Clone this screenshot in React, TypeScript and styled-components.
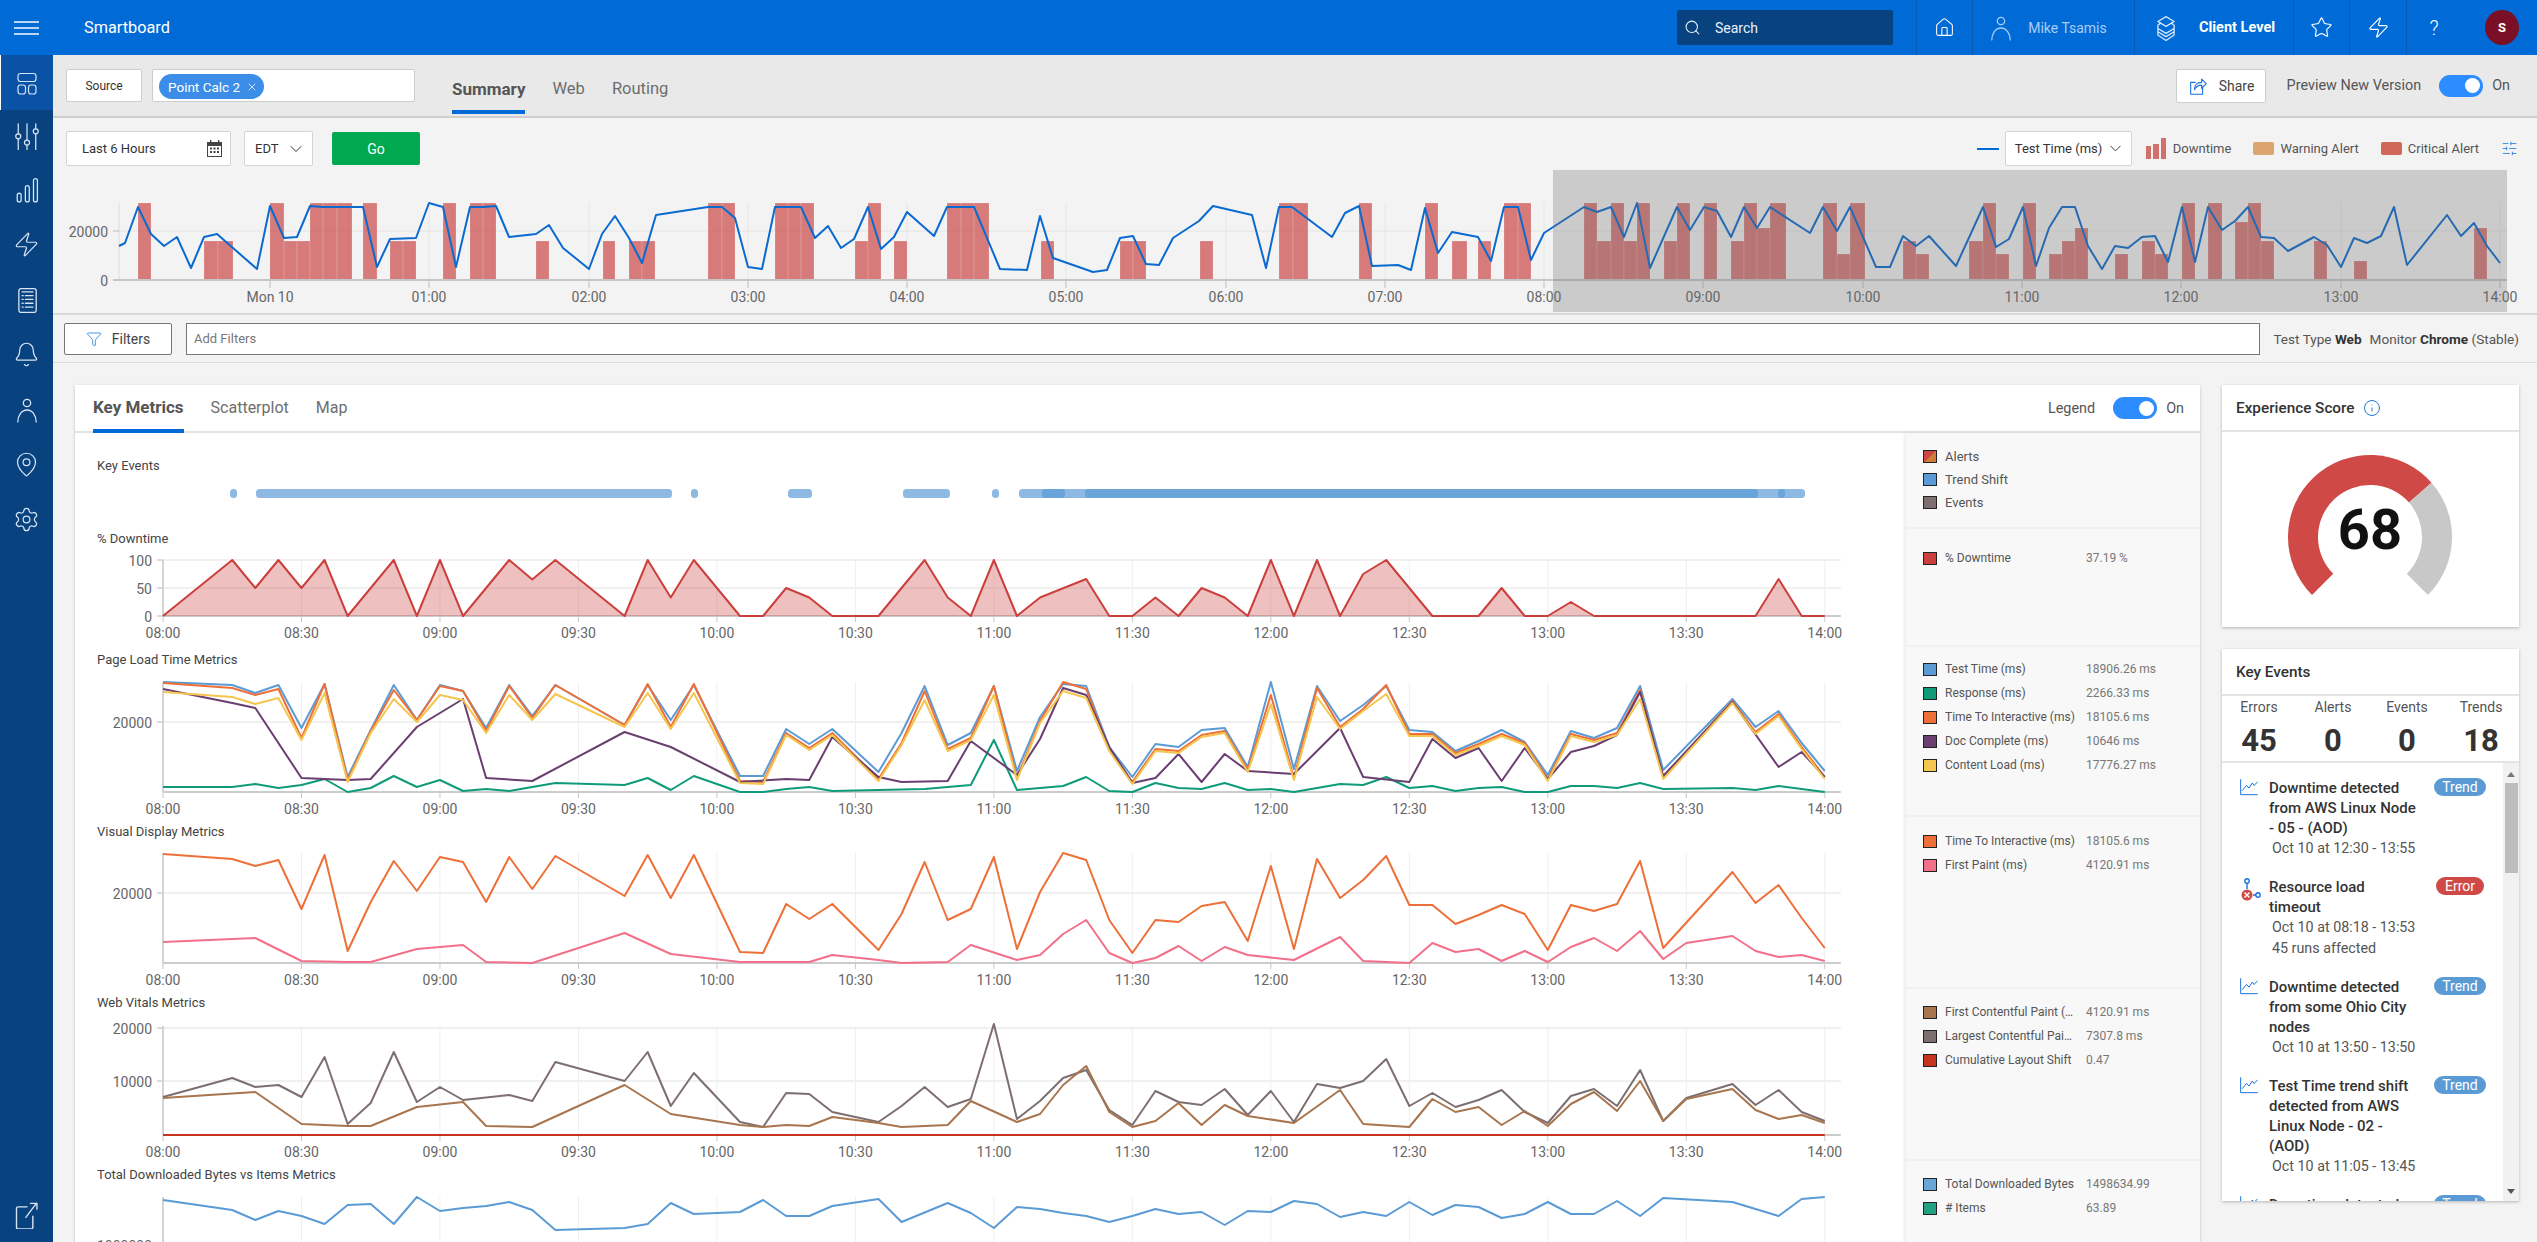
import React from "react";
import styled, { createGlobalStyle } from "styled-components";
import { Search, House, Star, Zap, ChevronDown, X, Funnel, SlidersHorizontal, Bell, MapPin, Settings, Info } from "lucide-react";

type Pt = [number, number];

const GlobalStyle = createGlobalStyle`
  html, body { margin: 0; padding: 0; height: 100%; overflow: hidden; background: #f3f3f3; }
  body { font-family: Roboto, "Liberation Sans", sans-serif; color: #444; }
  * { box-sizing: border-box; }
  svg text { font-family: Roboto, "Liberation Sans", sans-serif; }
`;

/* chart data: [5 minute slot from 08:00, px from top of plot] */
const downtime: Pt[] = [[0,0],[3,100],[4,50],[5,100],[6,50],[7,100],[8,0],[10,100],[11,0],[12,100],[13,0],[15,100],[16,65],[17,100],[20,0],[21,100],[22,33],[23,100],[25,0],[26,0],[27,50],[28,33],[29,0],[31,0],[32,50],[33,100],[34,33],[35,0],[36,100],[37,0],[38,33],[40,66],[41,0],[42,0],[43,33],[44,0],[45,50],[46,33],[47,0],[48,100],[49,0],[50,100],[51,0],[52,75],[53,100],[55,0],[57,0],[58,50],[59,0],[60,0],[61,25],[62,0],[69,0],[70,66],[71,0],[72,0]];
const testTime: Pt[] = [[0,0],[3,3],[4,11],[5,3],[6,46],[7,2],[8,95],[9,48],[10,3],[11,38],[12,3],[13,9],[14,46],[15,3],[16,34],[17,3],[20,43],[21,3],[22,38],[23,3],[25,94],[26,94],[27,47],[28,62],[29,47],[31,90],[32,51],[33,4],[34,63],[35,51],[36,4],[37,89],[38,35],[39,2],[40,4],[41,65],[42,95],[43,62],[44,65],[45,48],[46,46],[47,85],[48,0],[49,87],[50,4],[51,39],[52,23],[53,4],[54,48],[55,50],[56,69],[57,59],[58,48],[59,60],[60,93],[61,49],[62,56],[63,46],[64,4],[65,88],[68,17],[69,45],[70,29],[71,61],[72,89]];
const response: Pt[] = [[0,105],[3,105],[4,102],[5,106],[6,103],[7,97],[8,110],[9,106],[10,94],[11,105],[12,98],[13,109],[14,107],[15,109],[16,105],[17,101],[20,103],[21,96],[22,108],[23,94],[25,110],[26,110],[27,107],[28,105],[29,109],[31,108],[33,107],[35,103],[36,58],[37,108],[38,106],[39,104],[40,95],[41,109],[42,110],[43,101],[44,106],[45,107],[46,101],[47,108],[48,107],[49,110],[50,106],[51,102],[52,103],[53,95],[54,106],[55,104],[56,109],[57,106],[58,105],[59,110],[60,110],[61,104],[62,104],[63,106],[64,101],[65,107],[68,106],[69,108],[70,104],[71,107],[72,110]];
const tti: Pt[] = [[0,1],[3,6],[4,13],[5,7],[6,56],[7,2],[8,98],[9,49],[10,8],[11,38],[12,4],[13,9],[14,49],[15,4],[16,36],[17,3],[20,43],[21,2],[22,45],[23,2],[25,99],[26,100],[27,51],[28,66],[29,51],[31,97],[32,61],[33,9],[34,67],[35,56],[36,4],[37,96],[38,39],[39,0],[40,7],[41,67],[42,100],[43,67],[44,69],[45,53],[46,49],[47,88],[48,13],[49,96],[50,6],[51,45],[52,27],[53,3],[54,52],[55,52],[56,71],[57,62],[58,52],[59,61],[60,97],[61,52],[62,58],[63,51],[64,8],[65,95],[68,19],[69,50],[70,32],[71,65],[72,95]];
const docComplete: Pt[] = [[0,7],[3,21],[4,26],[6,96],[8,98],[9,97],[11,45],[13,17],[14,96],[16,99],[20,50],[22,65],[25,100],[27,97],[28,98],[29,55],[31,95],[32,100],[34,99],[35,59],[37,93],[38,57],[39,6],[40,13],[41,65],[42,101],[43,96],[44,72],[45,100],[46,72],[47,89],[49,92],[51,46],[52,95],[54,100],[55,57],[56,76],[57,66],[58,99],[59,66],[60,97],[61,70],[62,64],[63,53],[64,10],[65,94],[68,20],[70,85],[71,70],[72,95]];
const contentLoad: Pt[] = tti.map(([i, y]): Pt => [i, Math.min(106, y < 14 ? y + 9 : y + 2)]);
const firstPaint: Pt[] = [[0,89],[4,85],[6,108],[8,109],[9,109],[11,96],[13,92],[14,109],[16,110],[20,80],[22,101],[25,109],[26,109],[27,109],[28,109],[29,102],[31,107],[32,110],[34,109],[35,92],[37,107],[38,102],[39,81],[40,67],[41,100],[42,110],[43,105],[44,93],[45,108],[46,94],[47,102],[49,107],[51,84],[52,108],[54,110],[55,90],[56,99],[57,96],[58,108],[59,98],[60,109],[61,94],[62,85],[63,98],[64,78],[65,106],[66,90],[68,83],[69,98],[70,104],[71,102],[72,108]];
const lcp: Pt[] = [[0,71],[3,52],[4,61],[5,59],[6,71],[7,31],[8,98],[9,77],[10,26],[11,76],[12,61],[13,74],[15,69],[16,75],[17,36],[20,55],[21,26],[22,80],[23,47],[25,96],[26,101],[27,67],[28,68],[29,86],[31,96],[32,80],[33,61],[34,81],[35,73],[36,-2],[37,93],[38,75],[39,52],[40,44],[41,84],[42,99],[43,65],[44,76],[45,79],[46,63],[47,89],[48,65],[49,96],[50,58],[51,62],[52,55],[53,33],[54,80],[55,67],[56,81],[57,74],[58,64],[59,86],[60,97],[61,70],[62,63],[63,80],[64,44],[65,95],[66,72],[68,58],[69,79],[70,64],[71,86],[72,95]];
const fcp: Pt[] = [[0,72],[4,66],[6,98],[8,100],[9,100],[11,81],[13,76],[14,100],[16,101],[20,59],[22,88],[25,99],[26,101],[27,99],[28,100],[29,91],[31,97],[32,101],[34,99],[35,75],[37,96],[38,88],[39,59],[40,40],[41,86],[42,101],[43,95],[44,77],[45,99],[46,79],[47,90],[49,97],[51,64],[52,98],[54,101],[55,73],[56,86],[57,81],[58,99],[59,85],[60,100],[61,78],[62,66],[63,85],[64,55],[65,95],[66,73],[68,63],[69,84],[70,93],[71,89],[72,97]];
const cls: Pt[] = [[0,109],[72,109]];
const bytes: Pt[] = [[0,3],[3,13],[4,23],[5,14],[6,19],[7,27],[8,8],[9,7],[10,27],[11,0],[12,14],[13,11],[14,9],[15,5],[16,13],[17,33],[20,31],[21,27],[22,6],[23,17],[25,15],[26,3],[27,19],[28,19],[29,9],[31,2],[32,25],[34,6],[35,16],[36,31],[37,10],[38,12],[39,16],[40,19],[41,25],[42,19],[43,12],[44,17],[45,15],[46,28],[47,14],[48,15],[49,4],[50,7],[51,20],[52,15],[53,19],[54,5],[55,18],[56,8],[57,10],[58,21],[59,17],[60,5],[61,17],[62,17],[63,4],[64,19],[65,1],[68,5],[70,19],[71,2],[72,0]];

/* overview chart, screen coordinates: [x, y] */
const overviewLine: Pt[] = [[119,246],[125,243],[138,207],[151,234],[164,246],[177,237],[191,268],[204,237],[217,234],[257,269],[270,206],[284,238],[297,237],[310,206],[323,207],[363,207],[377,267],[390,239],[416,238],[429,203],[443,207],[456,267],[470,207],[483,207],[496,206],[509,237],[536,234],[549,225],[563,248],[589,269],[602,234],[615,216],[629,238],[642,263],[656,215],[708,207],[722,207],[735,218],[748,267],[762,269],[775,207],[801,207],[815,238],[828,226],[841,248],[854,239],[868,207],[881,249],[894,237],[907,212],[934,236],[947,207],[974,207],[1000,269],[1027,270],[1040,216],[1053,258],[1093,272],[1107,270],[1120,238],[1133,236],[1146,264],[1159,265],[1173,238],[1199,221],[1213,206],[1252,215],[1266,268],[1279,207],[1292,207],[1332,237],[1345,213],[1359,206],[1372,266],[1398,265],[1411,270],[1425,208],[1438,253],[1452,232],[1478,237],[1491,261],[1504,207],[1518,207],[1531,260],[1544,233],[1584,207],[1597,212],[1611,207],[1624,237],[1637,203],[1650,268],[1677,207],[1690,230],[1704,207],[1717,211],[1731,237],[1744,207],[1757,228],[1770,207],[1810,233],[1823,207],[1837,231],[1850,207],[1876,267],[1890,267],[1903,236],[1916,246],[1929,236],[1956,266],[1983,207],[1996,247],[2009,239],[2023,207],[2036,266],[2049,228],[2062,207],[2075,207],[2088,246],[2102,269],[2115,246],[2128,248],[2142,237],[2155,236],[2168,262],[2182,207],[2195,262],[2208,207],[2222,230],[2235,221],[2248,207],[2261,237],[2274,238],[2288,251],[2314,237],[2327,245],[2341,267],[2354,238],[2367,243],[2381,236],[2394,207],[2407,265],[2447,215],[2461,236],[2474,223],[2487,246],[2500,263]];
/* [x start, x end, height] */
const T = 77, M = 39, L = 26, H = 52;
const overviewBars: [number, number, number][] = [[138,151,T],[204,218,M],[218,233,M],[270,284,T],[284,297,M],[297,310,M],[310,323,T],[323,337,T],[337,352,T],[363,377,T],[390,403,M],[403,416,M],[443,456,T],[470,483,T],[483,496,T],[536,549,M],[603,615,M],[629,642,M],[642,655,M],[708,722,T],[722,735,T],[775,788,T],[788,801,T],[801,814,T],[855,868,M],[868,881,T],[894,907,M],[947,961,T],[961,974,T],[974,989,T],[1041,1054,M],[1120,1133,M],[1133,1146,M],[1200,1213,M],[1279,1293,T],[1293,1308,T],[1359,1372,T],[1425,1438,T],[1452,1467,M],[1478,1491,M],[1504,1518,T],[1518,1531,T],[1584,1597,T],[1597,1611,M],[1611,1624,T],[1624,1637,M],[1637,1650,T],[1664,1677,M],[1677,1690,T],[1704,1717,T],[1731,1744,M],[1744,1757,T],[1757,1770,H],[1770,1786,T],[1823,1837,T],[1837,1850,L],[1850,1865,T],[1903,1916,M],[1916,1929,L],[1969,1983,M],[1983,1996,T],[1996,2009,L],[2023,2036,T],[2049,2062,L],[2062,2075,M],[2075,2088,H],[2115,2128,L],[2142,2155,M],[2155,2168,L],[2182,2195,T],[2208,2222,T],[2235,2248,58],[2248,2261,T],[2261,2274,M],[2314,2327,M],[2354,2367,19],[2474,2487,H]];
const overviewTicks: [number, string][] = [[270,"Mon 10"],[429,"01:00"],[589,"02:00"],[748,"03:00"],[907,"04:00"],[1066,"05:00"],[1226,"06:00"],[1385,"07:00"],[1544,"08:00"],[1703,"09:00"],[1863,"10:00"],[2022,"11:00"],[2181,"12:00"],[2341,"13:00"],[2500,"14:00"]];
const halfHours = ["08:00","08:30","09:00","09:30","10:00","10:30","11:00","11:30","12:00","12:30","13:00","13:30","14:00"];

const toPath = (pts: Pt[]) => pts.map(([x, y], i) => `${i ? "L" : "M"}${x} ${y}`).join(" ");

const Page = styled.div`
  width: 2537px;
  height: 1242px;
  display: flex;
  flex-direction: column;
  overflow: hidden;
`;

const Header = styled.header`
  height: 55px;
  flex: none;
  background: #006bd6;
  color: #fff;
  display: flex;
  align-items: stretch;
  padding-right: 18px;
`;

const Burger = styled.div`
  width: 53px;
  padding: 0 14px;
  display: flex;
  flex-direction: column;
  justify-content: center;
  gap: 4px;
  span { display: block; height: 2px; background: #b9d6f6; }
`;

const Brand = styled.div`
  margin-left: 31px;
  flex: 1;
  font-size: 16.3px;
  line-height: 55px;
`;

const SearchBox = styled.div`
  width: 216px;
  height: 35px;
  margin: 10px 23px 0 0;
  background: #08427f;
  border-radius: 2px;
  display: flex;
  align-items: center;
  gap: 14px;
  padding-left: 7px;
  font-size: 14px;
  color: #e8f1fb;
`;

const HeadCell = styled.div<{ $w: number }>`
  width: ${p => p.$w}px;
  border-left: 1px solid #0a5bb0;
  display: flex;
  align-items: center;
  justify-content: center;
  font-size: 14px;
`;

const UserCell = styled(HeadCell)`
  gap: 14px;
  padding-right: 12px;
`;

const ClientCell = styled(HeadCell)`
  gap: 20px;
`;

const HelpMark = styled.span`
  font-size: 20px;
  font-weight: 300;
`;

const UserName = styled.span`
  color: #a9cdf5;
`;

const ClientName = styled.span`
  font-size: 14.5px;
  font-weight: 700;
`;

const Avatar = styled.div`
  width: 34px;
  height: 35px;
  margin: 10px 0 0 24px;
  border-radius: 50%;
  background: #7a0f25;
  color: #fff;
  font-size: 13px;
  font-weight: 700;
  display: flex;
  align-items: center;
  justify-content: center;
`;

const Body = styled.div`
  flex: 1;
  display: flex;
  min-height: 0;
`;

const Sidebar = styled.nav`
  width: 53px;
  flex: none;
  background: #08427f;
  display: flex;
  flex-direction: column;
`;

const NavItem = styled.div<{ $active?: boolean; $bottom?: boolean }>`
  height: 55px;
  flex: none;
  display: flex;
  align-items: center;
  justify-content: center;
  color: #d6e4f4;
  padding-bottom: ${p => (p.$active || p.$bottom ? 0 : 6)}px;
  margin-top: ${p => (p.$bottom ? "auto" : 0)};
  background: ${p => (p.$active ? "#0a52a5" : "transparent")};
  border-left: ${p => (p.$active ? "1px solid #fff" : "none")};
`;

const Content = styled.div`
  flex: 1;
  min-width: 0;
  display: flex;
  flex-direction: column;
`;

const SubBar = styled.div`
  height: 63px;
  flex: none;
  background: #e9e9e9;
  border-bottom: 2px solid #cfcfcf;
  display: flex;
  align-items: center;
  padding: 0 27px 0 13px;
`;

const GhostButton = styled.button<{ $w: number; $h?: number }>`
  width: ${p => p.$w}px;
  height: ${p => p.$h ?? 33}px;
  background: #fff;
  border: 1px solid #cdcdcd;
  border-radius: 2px;
  font: 400 12px Roboto, sans-serif;
  color: #333;
  display: flex;
  align-items: center;
  justify-content: center;
  gap: 10px;
  padding: 0;
`;

const ChipInput = styled.div`
  width: 263px;
  height: 33px;
  margin-left: 10px;
  background: #fff;
  border: 1px solid #cdcdcd;
  border-radius: 2px;
  padding: 4px 6px;
`;

const Chip = styled.span`
  display: inline-flex;
  align-items: center;
  gap: 6px;
  height: 25px;
  width: 105px;
  padding-left: 9px;
  border-radius: 13px;
  background: #3b8de8;
  color: #fff;
  font-size: 13.5px;
`;

const TabRow = styled.div<{ $ml?: number }>`
  align-self: stretch;
  display: flex;
  gap: 27px;
  margin-left: ${p => p.$ml ?? 0}px;
`;

const Tab = styled.div<{ $active?: boolean }>`
  display: flex;
  align-items: center;
  font-size: ${p => (p.$active ? 17 : 16.5)}px;
  font-weight: ${p => (p.$active ? 700 : 400)};
  color: ${p => (p.$active ? "#555" : "#6e6e6e")};
  border-bottom: 4px solid ${p => (p.$active ? "#006bd6" : "transparent")};
`;

const SubTabs = styled(TabRow)`
  padding: 12px 0 2px;
`;

const Spacer = styled.div`
  flex: 1;
`;

const ShareLabel = styled.span`
  font-size: 14px;
  color: #444;
`;

const ToggleLabel = styled.span<{ $ml: number }>`
  font-size: 14.4px;
  color: #555;
  margin-left: ${p => p.$ml}px;
`;

const Toggle = styled.div<{ $ml: number }>`
  width: 44px;
  height: 22px;
  margin-left: ${p => p.$ml}px;
  border-radius: 11px;
  background: #2d8cff;
  display: flex;
  align-items: center;
  justify-content: flex-end;
  padding-right: 3px;
  &::after {
    content: "";
    width: 15px;
    height: 15px;
    border-radius: 50%;
    background: #fff;
  }
`;

const RangeBar = styled.section`
  height: 197px;
  flex: none;
  border-bottom: 2px solid #d9d9d9;
`;

const RangeControls = styled.div`
  height: 52px;
  display: flex;
  align-items: flex-start;
  padding: 13px 19px 0 13px;
`;

const SelectBox = styled.div<{ $w: number; $ml?: number; $pl?: number }>`
  width: ${p => p.$w}px;
  height: 35px;
  margin-left: ${p => p.$ml ?? 0}px;
  padding: 0 6px 0 ${p => p.$pl ?? 10}px;
  background: #fff;
  border: 1px solid #d4d4d4;
  border-radius: 2px;
  display: flex;
  align-items: center;
  justify-content: space-between;
  font-size: 13px;
  color: #333;
`;

const GoButton = styled.button`
  width: 88px;
  height: 33px;
  margin: 1px 0 0 19px;
  border: 0;
  border-radius: 2px;
  background: #00a94f;
  color: #fff;
  font: 400 14px Roboto, sans-serif;
`;

const LineMark = styled.span`
  width: 22px;
  height: 2px;
  margin: 17px 6px 0 0;
  background: #006bd6;
`;

const KeyItem = styled.div<{ $ml: number }>`
  height: 35px;
  margin-left: ${p => p.$ml}px;
  display: flex;
  align-items: center;
  gap: 6px;
  font-size: 13px;
  color: #555;
`;

const KeySwatch = styled.span<{ $color: string }>`
  width: 21px;
  height: 13px;
  border-radius: 2px;
  background: ${p => p.$color};
`;

const OverviewSvg = styled.svg`
  display: block;
`;

const FilterBar = styled.div`
  height: 48px;
  flex: none;
  border-bottom: 1px solid #dcdcdc;
  display: flex;
  align-items: center;
  padding: 0 18px 0 11px;
`;

const FilterButton = styled.button`
  width: 108px;
  height: 32px;
  flex: none;
  background: #fff;
  border: 1px solid #777;
  border-radius: 2px;
  display: flex;
  align-items: center;
  justify-content: center;
  gap: 10px;
  font: 400 14px Roboto, sans-serif;
  color: #444;
`;

const FilterInput = styled.div`
  flex: 1;
  height: 32px;
  margin: 0 13px 0 14px;
  padding-left: 7px;
  background: #fff;
  border: 1px solid #777;
  font-size: 13px;
  line-height: 30px;
  color: #777;
`;

const FilterMeta = styled.div`
  flex: none;
  font-size: 13.6px;
  color: #555;
  b { font-weight: 700; color: #333; }
  span { margin-left: 8px; }
`;

const Main = styled.main`
  flex: 1;
  min-height: 0;
  display: flex;
  align-items: flex-start;
  gap: 22px;
  padding: 22px 18px 0 22px;
  overflow: hidden;
`;

const MetricsCard = styled.section`
  flex: 1;
  min-width: 0;
  background: #fff;
  box-shadow: 0 1px 3px rgba(0, 0, 0, 0.2);
`;

const CardHead = styled.div`
  height: 48px;
  border-bottom: 2px solid #e2e2e2;
  display: flex;
  align-items: stretch;
  padding: 0 16px 0 18px;
`;

const MetricTab = styled(Tab)`
  font-size: ${p => (p.$active ? 17 : 16)}px;
  margin-bottom: -2px;
`;

const LegendSwitch = styled.div`
  display: flex;
  align-items: center;
`;

const MetricsBody = styled.div`
  display: grid;
  grid-template-columns: 1fr 294px;
`;

const Plots = styled.div`
  padding-top: 23px;
  min-width: 0;
`;

const PlotBlock = styled.div<{ $h: number }>`
  height: ${p => p.$h}px;
`;

const PlotTitle = styled.div`
  height: 20px;
  padding-left: 22px;
  font-size: 13px;
  line-height: 20px;
  color: #444;
`;

const PlotSvg = styled.svg`
  display: block;
`;

const LegendPanel = styled.aside`
  background: #f8f8f8;
  box-shadow: -2px 0 3px rgba(0, 0, 0, 0.08);
  min-height: 800px;
`;

const LegendSection = styled.div<{ $h: number; $top: number }>`
  height: ${p => p.$h}px;
  padding: ${p => p.$top}px 0 0 17px;
  border-bottom: 2px solid #f0f0f0;
`;

const LegendRow = styled.div`
  height: 24px;
  display: grid;
  grid-template-columns: 14px 133px 1fr;
  column-gap: 8px;
  align-items: center;
  font-size: 12px;
  color: #555;
`;

const EventRow = styled(LegendRow)`
  height: 23px;
  font-size: 13px;
`;

const LegendName = styled.span`
  white-space: nowrap;
  overflow: hidden;
  text-overflow: ellipsis;
`;

const LegendValue = styled.span`
  color: #777;
  white-space: nowrap;
`;

const Swatch = styled.i<{ $color: string }>`
  display: block;
  width: 14px;
  height: 13px;
  border: 1px solid #222;
  background: ${p => p.$color};
`;

const SideColumn = styled.div`
  width: 297px;
  flex: none;
  display: flex;
  flex-direction: column;
  gap: 22px;
`;

const SideCard = styled.section<{ $h: number }>`
  height: ${p => p.$h}px;
  background: #fff;
  box-shadow: 0 1px 3px rgba(0, 0, 0, 0.25);
  display: flex;
  flex-direction: column;
  overflow: hidden;
`;

const SideHead = styled.div`
  height: 47px;
  flex: none;
  padding-left: 14px;
  display: flex;
  align-items: center;
  gap: 8px;
  border-bottom: 2px solid #e4e4e4;
  font-size: 15.3px;
  font-weight: 500;
  color: #333;
`;

const CountGrid = styled.div`
  height: 67px;
  flex: none;
  display: grid;
  grid-template-columns: repeat(4, 74px);
  padding: 1px 0 0 0;
  border-bottom: 2px solid #e4e4e4;
  text-align: center;
`;

const CountCell = styled.div`
  font-size: 14px;
  line-height: 20px;
  color: #555;
  b {
    display: block;
    margin-top: 6px;
    font-size: 31px;
    line-height: 36px;
    font-weight: 700;
    color: #333;
  }
`;

const EventScroller = styled.div`
  flex: 1;
  min-height: 0;
  display: flex;
  overflow: hidden;
`;

const EventList = styled.div`
  flex: 1;
  padding: 15px 0 0 17px;
  display: flex;
  flex-direction: column;
  gap: 18px;
  overflow: hidden;
`;

const EventItem = styled.article`
  flex: none;
  display: grid;
  grid-template-columns: 30px 165px 52px;
  align-items: start;
`;

const EventTitle = styled.div`
  font-size: 15px;
  font-weight: 500;
  line-height: 20px;
  color: #333;
  white-space: nowrap;
`;

const EventMeta = styled.div`
  padding-left: 3px;
  font-size: 14.3px;
  line-height: 21px;
  color: #555;
  white-space: nowrap;
`;

const Badge = styled.span<{ $error?: boolean }>`
  display: block;
  height: 18px;
  margin: 0 ${p => (p.$error ? 2 : 0)}px;
  border-radius: 9px;
  background: ${p => (p.$error ? "#cf4946" : "#5b9bd5")};
  color: #fff;
  font-size: 14px;
  line-height: 18px;
  text-align: center;
`;

const ScrollRail = styled.div`
  width: 16px;
  flex: none;
  background: #f1f1f1;
  display: flex;
  flex-direction: column;
  align-items: center;
  justify-content: space-between;
  padding: 9px 0 7px;
`;

const ScrollThumb = styled.div`
  width: 13px;
  height: 90px;
  margin-top: 6px;
  margin-bottom: auto;
  background: #bdbdbd;
`;

const ArrowUp = styled.i`
  border: 4px solid transparent;
  border-top: 0;
  border-bottom: 5px solid #777;
`;

const ArrowDown = styled.i`
  border: 4px solid transparent;
  border-bottom: 0;
  border-top: 5px solid #555;
`;

const Line = ({ color = "currentColor", w = 1.2, children, size = 24 }: { color?: string; w?: number; children: React.ReactNode; size?: number }) => (
  <svg width={size} height={size} viewBox="0 0 24 24" fill="none" stroke={color} strokeWidth={w} strokeLinecap="round" strokeLinejoin="round">{children}</svg>
);

const PanelsIcon = () => (
  <Line><rect x="3" y="2.5" width="18" height="8" rx="2.5" /><rect x="3" y="14" width="7.5" height="9" rx="2.5" /><rect x="13.5" y="14" width="7.5" height="9" rx="2.5" /></Line>
);
const TunersIcon = () => (
  <Line size={30} w={1}><path d="M5 3v8M5 15v12M12 3v13M12 20v7M19 3v4M19 11v16" /><circle cx="5" cy="13" r="2" /><circle cx="12" cy="18" r="2" /><circle cx="19" cy="9" r="2" /></Line>
);
const BarsIcon = () => (
  <Line size={26}><rect x="3" y="15" width="3.6" height="8" rx="1.8" /><rect x="10.5" y="8" width="3.6" height="15" rx="1.8" /><rect x="18" y="1.5" width="3.6" height="21.5" rx="1.8" /></Line>
);
const ReportIcon = () => (
  <Line size={26}><rect x="4.5" y="1.5" width="16" height="22" rx="2" /><path d="M7.5 4.5h10M7.5 8h1M10.5 8h7M7.5 11.5h1M10.5 11.5h7M7.5 15h1M10.5 15h7M7.5 18.5h1M10.5 18.5h7" /></Line>
);
const PersonIcon = ({ size = 26, color }: { size?: number; color?: string }) => (
  <Line size={size} color={color}><circle cx="12" cy="5.5" r="3.4" /><path d="M3.5 23c0-6 3.5-11 8.5-11s8.5 5 8.5 11" /></Line>
);
const ExportIcon = () => (
  <Line size={28}><path d="M12 5H4.5A1.5 1.5 0 0 0 3 6.5v16A1.5 1.5 0 0 0 4.5 24h11a1.5 1.5 0 0 0 1.5-1.5V13" /><path d="M11 14 20 2M15 2h5.5v5" /></Line>
);
const LayersIcon = () => (
  <Line size={26} color="#d8e8fb"><path d="M12 1.5 19.5 6 12 10.5 4.5 6z" /><path d="M7 7.5 4.5 9.5v3L12 17l7.5-4.5v-3L17 7.5M4.5 12.5v3L12 20l7.5-4.5v-3M4.5 15.5v3L12 23.5l7.5-5v-3" /></Line>
);
const ShareIcon = () => (
  <Line size={22} color="#1a73d9"><path d="M17 13v8H4V8h5" /><path d="M8 16c0-5 3-8 8-8V4.5L21 9.5l-5 5V11c-3 0-6 1-8 5z" /></Line>
);
const CalendarIcon = () => (
  <svg width="19" height="19" viewBox="0 0 19 19" fill="#444"><path d="M2 3h15v15H2zM3 7v10h13V7z" fillRule="evenodd" /><rect x="5" y="1" width="1.4" height="3" /><rect x="13" y="1" width="1.4" height="3" /><path d="M5 8.5h2v2H5zM8.5 8.5h2v2h-2zM12 8.5h2v2h-2zM5 12h2v2H5zM8.5 12h2v2h-2zM12 12h2v2h-2z" /></svg>
);
const DowntimeIcon = () => (
  <svg width="21" height="21" viewBox="0 0 21 21" fill="#d4706c"><rect x="0" y="8" width="5" height="13" /><rect x="7" y="13" width="3" height="8" /><rect x="7" y="6" width="6" height="15" /><rect x="15" y="0" width="5" height="21" /></svg>
);
const TrendIcon = () => (
  <Line size={20} color="#1a73d9"><path d="M2 2v18h20" /><path d="M4 15l5-6 3 3 4-6 2 3 4-4" /></Line>
);
const ResourceIcon = () => (
  <svg width="22" height="30" viewBox="0 0 22 30" fill="none">
    <circle cx="8" cy="4" r="2.2" stroke="#1a73d9" strokeWidth="1.4" />
    <path d="M8 6v6M14 18h3" stroke="#1a73d9" strokeWidth="1.4" />
    <circle cx="19" cy="18" r="2.2" stroke="#1a73d9" strokeWidth="1.4" />
    <circle cx="8" cy="18" r="5.5" fill="#cf4946" />
    <path d="M5.5 15.5l5 5M10.5 15.5l-5 5" stroke="#fff" strokeWidth="1.4" />
  </svg>
);

const xOf = (slot: number) => 88 + slot * 23.08;
const svgWidth = 1831;

interface SeriesDef { color: string; pts: Pt[] }

const Plot = ({ height, top, bottom, yTicks, series, area, noLabels }: {
  height: number; top: number; bottom: number;
  yTicks: { y: number; label: string }[];
  series: SeriesDef[];
  area?: boolean;
  noLabels?: boolean;
}) => (
  <PlotSvg width={svgWidth} height={height}>
    {halfHours.map((t, i) => (
      <g key={t}>
        <line x1={xOf(i * 6)} x2={xOf(i * 6)} y1={top} y2={bottom} stroke="#efefef" strokeWidth="1" />
        <line x1={xOf(i * 6)} x2={xOf(i * 6)} y1={bottom} y2={bottom + 6} stroke="#c8c8c8" strokeWidth="1" />
        {!noLabels && <text x={xOf(i * 6)} y={bottom + 22} fontSize="14" fill="#666" textAnchor="middle">{t}</text>}
      </g>
    ))}
    {yTicks.map(t => (
      <g key={t.label}>
        <line x1="82" x2={xOf(72) + 16} y1={t.y} y2={t.y} stroke="#f0f0f0" strokeWidth="2" />
        <line x1="82" x2="88" y1={t.y} y2={t.y} stroke="#c8c8c8" strokeWidth="1" />
        <text x="77" y={t.y + 6} fontSize="14" fill="#666" textAnchor="end">{t.label}</text>
      </g>
    ))}
    <line x1="88" x2="88" y1={top} y2={bottom} stroke="#c8c8c8" strokeWidth="1.5" />
    <line x1="88" x2={xOf(72) + 16} y1={bottom} y2={bottom} stroke="#cccccc" strokeWidth="2" />
    {series.map(s => {
      const pts = s.pts.map(([i, y]): Pt => [xOf(i), top + y]);
      return (
        <g key={s.color}>
          {area && <path d={`${toPath(pts)} L${xOf(72)} ${bottom} L88 ${bottom} Z`} fill={s.color} fillOpacity="0.32" />}
          <path d={toPath(pts)} fill="none" stroke={s.color} strokeWidth="2" strokeLinejoin="round" />
        </g>
      );
    })}
  </PlotSvg>
);

const Overview = () => (
  <OverviewSvg width="2484" height="142" viewBox="53 170 2484 142">
    <line x1="119" x2="2507" y1="231" y2="231" stroke="#e4e4e4" strokeWidth="1" />
    <line x1="119" x2="119" y1="203" y2="280" stroke="#dcdcdc" strokeWidth="1" />
    {overviewTicks.map(([x, label]) => (
      <g key={label}>
        <line x1={x} x2={x} y1="203" y2="280" stroke="#e6e6e6" strokeWidth="1" />
        <line x1={x} x2={x} y1="280" y2="288" stroke="#bdbdbd" strokeWidth="1" />
        <text x={x} y="302" fontSize="14" fill="#666" textAnchor="middle">{label}</text>
      </g>
    ))}
    <line x1="113" x2="119" y1="231" y2="231" stroke="#bdbdbd" strokeWidth="1" />
    <text x="108" y="237" fontSize="14" fill="#666" textAnchor="end">20000</text>
    <text x="108" y="286" fontSize="14" fill="#666" textAnchor="end">0</text>
    {overviewBars.map(([a, b, h]) => (
      <rect key={a} x={a} y={280 - h} width={b - a} height={h} fill="#c8423f" fillOpacity="0.68" stroke="#fff" strokeOpacity="0.2" strokeWidth="0.8" />
    ))}
    <line x1="113" x2="2507" y1="280" y2="280" stroke="#c6c6c6" strokeWidth="2" />
    <path d={toPath(overviewLine)} fill="none" stroke="#0a6ad0" strokeWidth="2" strokeLinejoin="round" />
    <rect x="1553" y="170" width="954" height="142" fill="#6c6c6c" fillOpacity="0.29" />
  </OverviewSvg>
);

const KeyTimeline = () => {
  const spans = [[230, 237], [256, 672], [691, 698], [788, 812], [903, 950], [992, 999], [1019, 1805]];
  const dark = [[1042, 1065], [1085, 1758], [1778, 1785]];
  return (
    <svg width={svgWidth} height="30" style={{ display: "block" }}>
      {spans.map(([a, b]) => <rect key={a} x={a - 75} y="13" width={b - a} height="9" rx="3.5" fill="#8db9e3" />)}
      {dark.map(([a, b]) => <rect key={a} x={a - 75} y="13" width={b - a} height="9" rx="3.5" fill="#6aa5d9" />)}
    </svg>
  );
};

const polar = (a: number, r: number) => {
  const t = (a * Math.PI) / 180;
  return `${148 + r * Math.sin(t)} ${105 - r * Math.cos(t)}`;
};
const arc = (from: number, to: number) => {
  const big = to - from > 180 ? 1 : 0;
  return `M${polar(from, 82)} A82 82 0 ${big} 1 ${polar(to, 82)} L${polar(to, 52)} A52 52 0 ${big} 0 ${polar(from, 52)} Z`;
};

const Gauge = () => (
  <svg width="297" height="193" style={{ display: "block" }}>
    <path d={arc(-135, 48.6)} fill="#cf4946" />
    <path d={arc(48.6, 135)} fill="#c8c8c8" />
    <text x="148" y="117" fontSize="56" fontWeight="700" fill="#111" textAnchor="middle">68</text>
  </svg>
);

const events = [
  { kind: "Trend", title: ["Downtime detected", "from AWS Linux Node", "- 05 - (AOD)"], meta: ["Oct 10 at 12:30 - 13:55"] },
  { kind: "Error", title: ["Resource load", "timeout"], meta: ["Oct 10 at 08:18 - 13:53", "45 runs affected"] },
  { kind: "Trend", title: ["Downtime detected", "from some Ohio City", "nodes"], meta: ["Oct 10 at 13:50 - 13:50"] },
  { kind: "Trend", title: ["Test Time trend shift", "detected from AWS", "Linux Node - 02 -", "(AOD)"], meta: ["Oct 10 at 11:05 - 13:45"] },
  { kind: "Trend", title: ["Downtime detected"], meta: [] as string[] },
];

const legends: { h: number; top: number; rows: [string, string, string][] }[] = [
  { h: 118, top: 17, rows: [["#cb3f3c", "% Downtime", "37.19 %"]] },
  { h: 170, top: 10, rows: [["#5b9bd5", "Test Time (ms)", "18906.26 ms"], ["#0f9b7a", "Response (ms)", "2266.33 ms"], ["#ee7038", "Time To Interactive (ms)", "18105.6 ms"], ["#6a3f70", "Doc Complete (ms)", "10646 ms"], ["#f5c64f", "Content Load (ms)", "17776.27 ms"]] },
  { h: 172, top: 12, rows: [["#ee7038", "Time To Interactive (ms)", "18105.6 ms"], ["#f2708a", "First Paint (ms)", "4120.91 ms"]] },
  { h: 172, top: 11, rows: [["#a8754f", "First Contentful Paint (ms)", "4120.91 ms"], ["#7d6f6f", "Largest Contentful Paint (ms)", "7307.8 ms"], ["#c5341f", "Cumulative Layout Shift", "0.47"]] },
  { h: 90, top: 11, rows: [["#6aa5d9", "Total Downloaded Bytes", "1498634.99"], ["#22a283", "# Items", "63.89"]] },
];

export default function App() {
  return (
    <Page>
      <GlobalStyle />
      <Header>
        <Burger><span /><span /><span /></Burger>
        <Brand>Smartboard</Brand>
        <SearchBox><Search size={17} strokeWidth={1.5} />Search</SearchBox>
        <HeadCell $w={56}><House size={21} strokeWidth={1.2} /></HeadCell>
        <UserCell $w={162}><PersonIcon color="#a9cdf5" /><UserName>Mike Tsamis</UserName></UserCell>
        <ClientCell $w={159}><LayersIcon /><ClientName>Client Level</ClientName></ClientCell>
        <HeadCell $w={56}><Star size={23} strokeWidth={1.2} /></HeadCell>
        <HeadCell $w={57}><Zap size={23} strokeWidth={1.2} /></HeadCell>
        <HeadCell $w={55}><HelpMark>?</HelpMark></HeadCell>
        <Avatar>S</Avatar>
      </Header>
      <Body>
        <Sidebar>
          <NavItem $active><PanelsIcon /></NavItem>
          <NavItem><TunersIcon /></NavItem>
          <NavItem><BarsIcon /></NavItem>
          <NavItem><Zap size={27} strokeWidth={1.1} /></NavItem>
          <NavItem><ReportIcon /></NavItem>
          <NavItem><Bell size={27} strokeWidth={1.1} /></NavItem>
          <NavItem><PersonIcon /></NavItem>
          <NavItem><MapPin size={27} strokeWidth={1.1} /></NavItem>
          <NavItem><Settings size={27} strokeWidth={1.1} /></NavItem>
          <NavItem $bottom><ExportIcon /></NavItem>
        </Sidebar>
        <Content>
          <SubBar>
            <GhostButton $w={76}>Source</GhostButton>
            <ChipInput><Chip>Point Calc 2<X size={12} strokeWidth={1.5} /></Chip></ChipInput>
            <SubTabs $ml={37}>
              <Tab $active>Summary</Tab>
              <Tab>Web</Tab>
              <Tab>Routing</Tab>
            </SubTabs>
            <Spacer />
            <GhostButton $w={90} $h={34}><ShareIcon /><ShareLabel>Share</ShareLabel></GhostButton>
            <ToggleLabel $ml={21}>Preview New Version</ToggleLabel>
            <Toggle $ml={18} />
            <ToggleLabel $ml={9}>On</ToggleLabel>
          </SubBar>
          <RangeBar>
            <RangeControls>
              <SelectBox $w={165} $pl={15}>Last 6 Hours<CalendarIcon /></SelectBox>
              <SelectBox $w={69} $ml={13}>EDT<ChevronDown size={20} strokeWidth={1.2} /></SelectBox>
              <GoButton>Go</GoButton>
              <Spacer />
              <LineMark />
              <SelectBox $w={127} $pl={9}>Test Time (ms)<ChevronDown size={19} strokeWidth={1.2} /></SelectBox>
              <KeyItem $ml={14}><DowntimeIcon />Downtime</KeyItem>
              <KeyItem $ml={22}><KeySwatch $color="#dca56f" />Warning Alert</KeyItem>
              <KeyItem $ml={22}><KeySwatch $color="#cf6858" />Critical Alert</KeyItem>
              <KeyItem $ml={22}><SlidersHorizontal size={17} strokeWidth={1.3} color="#2f86e0" /></KeyItem>
            </RangeControls>
            <Overview />
          </RangeBar>
          <FilterBar>
            <FilterButton><Funnel size={16} strokeWidth={1.3} color="#2f86e0" />Filters</FilterButton>
            <FilterInput>Add Filters</FilterInput>
            <FilterMeta>Test Type <b>Web</b><span>Monitor <b>Chrome</b> (Stable)</span></FilterMeta>
          </FilterBar>
          <Main>
            <MetricsCard>
              <CardHead>
                <TabRow>
                  <MetricTab $active>Key Metrics</MetricTab>
                  <MetricTab>Scatterplot</MetricTab>
                  <MetricTab>Map</MetricTab>
                </TabRow>
                <Spacer />
                <LegendSwitch>
                  <ToggleLabel $ml={0}>Legend</ToggleLabel>
                  <Toggle $ml={18} />
                  <ToggleLabel $ml={9}>On</ToggleLabel>
                </LegendSwitch>
              </CardHead>
              <MetricsBody>
                <Plots>
                  <PlotBlock $h={73}>
                    <PlotTitle>Key Events</PlotTitle>
                    <KeyTimeline />
                  </PlotBlock>
                  <PlotBlock $h={121}>
                    <PlotTitle>% Downtime</PlotTitle>
                    <Plot height={101} top={11} bottom={67} area
                      yTicks={[{ y: 11, label: "100" }, { y: 39, label: "50" }, { y: 67, label: "0" }]}
                      series={[{ color: "#cb3f3c", pts: downtime.map(([i, v]): Pt => [i, 56 - v * 0.56]) }]} />
                  </PlotBlock>
                  <PlotBlock $h={172}>
                    <PlotTitle>Page Load Time Metrics</PlotTitle>
                    <Plot height={152} top={12} bottom={122}
                      yTicks={[{ y: 52, label: "20000" }]}
                      series={[
                        { color: "#5b9bd5", pts: testTime },
                        { color: "#0f9b7a", pts: response },
                        { color: "#ee7038", pts: tti },
                        { color: "#6a3f70", pts: docComplete },
                        { color: "#f5c64f", pts: contentLoad },
                      ]} />
                  </PlotBlock>
                  <PlotBlock $h={171}>
                    <PlotTitle>Visual Display Metrics</PlotTitle>
                    <Plot height={151} top={11} bottom={121}
                      yTicks={[{ y: 51, label: "20000" }]}
                      series={[{ color: "#ee7038", pts: tti }, { color: "#f2708a", pts: firstPaint }]} />
                  </PlotBlock>
                  <PlotBlock $h={172}>
                    <PlotTitle>Web Vitals Metrics</PlotTitle>
                    <Plot height={152} top={13} bottom={122}
                      yTicks={[{ y: 15, label: "20000" }, { y: 68, label: "10000" }]}
                      series={[{ color: "#7d6f6f", pts: lcp }, { color: "#a8754f", pts: fcp }, { color: "#c5341f", pts: cls }]} />
                  </PlotBlock>
                  <PlotBlock $h={77}>
                    <PlotTitle>Total Downloaded Bytes vs Items Metrics</PlotTitle>
                    <Plot height={57} top={12} bottom={122} noLabels
                      yTicks={[{ y: 60, label: "1000000" }]}
                      series={[{ color: "#5b9bd5", pts: bytes }]} />
                  </PlotBlock>
                </Plots>
                <LegendPanel>
                  <LegendSection $h={96} $top={12}>
                    <EventRow><Swatch $color="linear-gradient(to bottom right, #cb4543 50%, #cf7c3a 50%)" /><LegendName>Alerts</LegendName></EventRow>
                    <EventRow><Swatch $color="#5b9bd5" /><LegendName>Trend Shift</LegendName></EventRow>
                    <EventRow><Swatch $color="#7d6f6f" /><LegendName>Events</LegendName></EventRow>
                  </LegendSection>
                  {legends.map(l => (
                    <LegendSection key={l.rows[0][1] + l.h} $h={l.h} $top={l.top}>
                      {l.rows.map(([c, name, value]) => (
                        <LegendRow key={name}>
                          <Swatch $color={c} />
                          <LegendName>{name}</LegendName>
                          <LegendValue>{value}</LegendValue>
                        </LegendRow>
                      ))}
                    </LegendSection>
                  ))}
                </LegendPanel>
              </MetricsBody>
            </MetricsCard>
            <SideColumn>
              <SideCard $h={242}>
                <SideHead>Experience Score<Info size={18} strokeWidth={1.3} color="#1a73d9" /></SideHead>
                <Gauge />
              </SideCard>
              <SideCard $h={552}>
                <SideHead>Key Events</SideHead>
                <CountGrid>
                  <CountCell>Errors<b>45</b></CountCell>
                  <CountCell>Alerts<b>0</b></CountCell>
                  <CountCell>Events<b>0</b></CountCell>
                  <CountCell>Trends<b>18</b></CountCell>
                </CountGrid>
                <EventScroller>
                  <EventList>
                    {events.map((e, i) => (
                      <EventItem key={i}>
                        {e.kind === "Error" ? <ResourceIcon /> : <TrendIcon />}
                        <div>
                          <EventTitle>{e.title.map(t => <div key={t}>{t}</div>)}</EventTitle>
                          {e.meta.map(m => <EventMeta key={m}>{m}</EventMeta>)}
                        </div>
                        <Badge $error={e.kind === "Error"}>{e.kind}</Badge>
                      </EventItem>
                    ))}
                  </EventList>
                  <ScrollRail>
                    <ArrowUp />
                    <ScrollThumb />
                    <ArrowDown />
                  </ScrollRail>
                </EventScroller>
              </SideCard>
            </SideColumn>
          </Main>
        </Content>
      </Body>
    </Page>
  );
}
